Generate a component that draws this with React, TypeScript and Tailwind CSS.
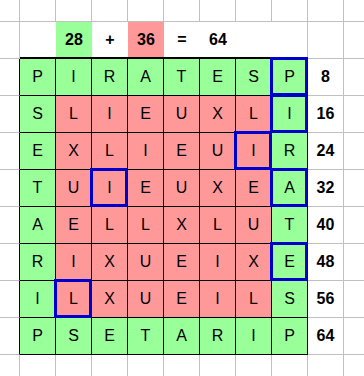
import React from 'react';

const letters = ['PIRATESP', 'SLIEUXLI', 'EXLIEUIR', 'TUIEUXEA', 'AELLXLUT', 'RIXUEIXE', 'ILXUEILS', 'PSETARIP'];
const boxed = ['0,7', '1,7', '2,6', '3,2', '3,7', '5,7', '6,1'];
const sums = [8, 16, 24, 32, 40, 48, 56, 64];

const gray = 'border-r border-b border-[#c0c0c0]';

function Blank({ className = gray }: { className?: string }) {
  return <div className={className} />;
}

function SumRow() {
  const cells: React.ReactNode[] = [];
  cells.push(<Blank key="c0" />);
  const content: Record<number, { text: string; bg: string }> = {
    2: { text: '28', bg: 'bg-[#99ff99]' },
    3: { text: '+', bg: 'bg-white' },
    4: { text: '36', bg: 'bg-[#ff9999]' },
    5: { text: '=', bg: 'bg-white' },
    6: { text: '64', bg: 'bg-white' },
  };
  for (let c = 1; c <= 8; c++) {
    const item = content[c];
    cells.push(
      <div
        key={'s' + c}
        className={`flex items-center justify-center border-b-2 border-black text-[16px] font-bold ${
          c === 8 ? 'border-r border-r-[#c0c0c0]' : ''
        } ${item ? item.bg : 'bg-white'}`}
      >
        {item?.text}
      </div>
    );
  }
  cells.push(<Blank key="c9" />);
  cells.push(<Blank key="c10" className="border-b border-[#c0c0c0]" />);
  return <>{cells}</>;
}

function LetterRow({ row, word }: { row: number; word: string }) {
  return (
    <>
      <div className="border-r border-r-black border-b border-b-[#c0c0c0]" />
      {word.split('').map((ch, c) => {
        const green = row === 0 || row === 7 || c === 0 || c === 7;
        return (
          <div
            key={c}
            className={`relative flex items-center justify-center border-r border-b border-black text-[16px] ${
              green ? 'bg-[#99ff99]' : 'bg-[#ff9999]'
            }`}
          >
            {ch}
            {boxed.includes(`${row},${c}`) && (
              <div className="absolute -left-[2px] -top-[2px] -right-px -bottom-px border-[3px] border-[#0000cc]" />
            )}
          </div>
        );
      })}
      <div className={`flex items-center justify-center text-[16px] font-bold ${gray}`}>{sums[row]}</div>
      <Blank className="border-b border-[#c0c0c0]" />
    </>
  );
}

export default function App() {
  return (
    <div className="grid h-[376px] w-[364px] grid-cols-[20px_repeat(9,36px)_20px] grid-rows-[22px_37px_repeat(8,37px)_21px] overflow-hidden bg-white font-['Liberation_Sans',Arial,sans-serif] text-black">
      {Array.from({ length: 10 }, (_, i) => (
        <Blank key={'t' + i} />
      ))}
      <Blank className="border-b border-[#c0c0c0]" />
      <SumRow />
      {letters.map((w, r) => (
        <LetterRow key={r} row={r} word={w} />
      ))}
      {Array.from({ length: 10 }, (_, i) => (
        <Blank key={'b' + i} className="border-r border-[#c0c0c0]" />
      ))}
      <Blank className="" />
    </div>
  );
}
